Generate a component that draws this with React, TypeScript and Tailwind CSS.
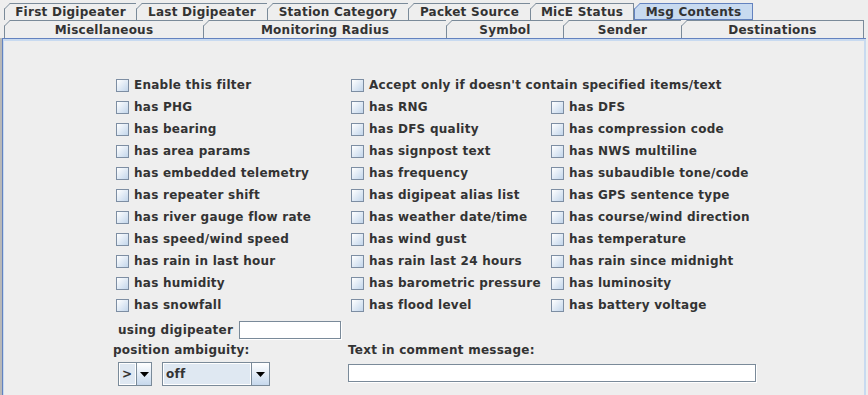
import React from 'react'

type Tab = { label: string; w: number; selected?: boolean }

const row1: Tab[] = [
  { label: 'First Digipeater', w: 133 },
  { label: 'Last Digipeater', w: 131 },
  { label: 'Station Category', w: 141 },
  { label: 'Packet Source', w: 122 },
  { label: 'MicE Status', w: 103 },
  { label: 'Msg Contents', w: 119, selected: true },
]

const row2: Tab[] = [
  { label: 'Miscellaneous', w: 200 },
  { label: 'Monitoring Radius', w: 243 },
  { label: 'Symbol', w: 117 },
  { label: 'Sender', w: 118 },
  { label: 'Destinations', w: 182 },
]

const rows: [string, string, string][] = [
  ['has PHG', 'has RNG', 'has DFS'],
  ['has bearing', 'has DFS quality', 'has compression code'],
  ['has area params', 'has signpost text', 'has NWS multiline'],
  ['has embedded telemetry', 'has frequency', 'has subaudible tone/code'],
  ['has repeater shift', 'has digipeat alias list', 'has GPS sentence type'],
  ['has river gauge flow rate', 'has weather date/time', 'has course/wind direction'],
  ['has speed/wind speed', 'has wind gust', 'has temperature'],
  ['has rain in last hour', 'has rain last 24 hours', 'has rain since midnight'],
  ['has humidity', 'has barometric pressure', 'has luminosity'],
  ['has snowfall', 'has flood level', 'has battery voltage'],
]

function TabItem({ tab, first, h }: { tab: Tab; first: boolean; h: string }) {
  const line = tab.selected ? '#6382bf' : '#7a8a99'
  return (
    <div
      className={`relative flex items-center justify-center border-t border-r ${h} ${
        first || tab.selected ? 'border-l' : ''
      } ${tab.selected ? 'bg-[#c8daf0] border-[#6382bf] border-b' : 'bg-[#eeeeee] border-[#7a8a99]'}`}
      style={{ width: tab.w }}
    >
      <svg className="absolute -top-px -left-px" width="7" height="7">
        <polygon points="0,0 6,0 0,6" fill="#eeeeee" />
        <line x1="0.5" y1="6" x2="6" y2="0.5" stroke={line} strokeWidth="1" />
      </svg>
      <span className="leading-none">{tab.label}</span>
    </div>
  )
}

function Check({ label }: { label: string }) {
  return (
    <div className="flex items-center h-[22px] gap-[5px] whitespace-nowrap">
      <div className="w-[13px] h-[13px] border border-[#7d8ea3] bg-linear-to-br from-[#ffffff] to-[#c3d6eb]" />
      <span>{label}</span>
    </div>
  )
}

function Combo({ value, w, field }: { value: string; w: number; field: number }) {
  return (
    <div className="flex h-[24px] border border-[#7a8a99]" style={{ width: w }}>
      <div
        className="flex items-center pl-[2px] border border-white bg-[#dfe8f2]"
        style={{ width: field }}
      >
        {value}
      </div>
      <div className="flex-1 flex items-center justify-center border-l border-[#7a8a99] bg-linear-to-b from-[#ffffff] to-[#c6d8ec]">
        <svg width="9" height="5" viewBox="0 0 9 5">
          <polygon points="0,0 9,0 4.5,5" fill="#000" />
        </svg>
      </div>
    </div>
  )
}

export default function App() {
  return (
    <div className="w-[868px] h-[395px] overflow-hidden bg-[#eeeeee] text-[#333333] text-[12px] tracking-[0.25px] font-bold font-['DejaVu_Sans',sans-serif]">
      <div className="pl-[4px] pt-[3px]">
        <div className="flex">
          {row1.map((t, i) => (
            <TabItem key={t.label} tab={t} first={i === 0} h="h-[17px]" />
          ))}
        </div>
        <div className="flex">
          {row2.map((t, i) => (
            <TabItem key={t.label} tab={t} first={i === 0} h="h-[18px]" />
          ))}
        </div>
      </div>

      <div className="flex h-[357px]">
        <div className="w-[2px] bg-[#b8b8b8]" />
        <div className="w-[864px] border-l border-t border-[#6382bf]">
          <div className="h-full border-t-2 border-l border-r-2 border-[#c8daf0] pt-[33px]">
            <div className="pl-[112px] grid grid-cols-[235px_200px_auto]">
              <Check label="Enable this filter" />
              <div className="col-span-2">
                <Check label="Accept only if doesn't contain specified items/text" />
              </div>
              {rows.map(r => (
                <React.Fragment key={r[0]}>
                  <Check label={r[0]} />
                  <Check label={r[1]} />
                  <Check label={r[2]} />
                </React.Fragment>
              ))}
            </div>

            <div className="pl-[114px] mt-[5px] flex items-center gap-[6px]">
              <span>using digipeater</span>
              <div className="w-[102px] h-[18px] border border-[#7a8a99] bg-white shadow-[1px_1px_0_#ffffff]" />
            </div>

            <div className="pl-[109px] mt-[3px] flex">
              <div className="w-[234px]">
                <div className="h-[16px] leading-[16px]">position ambiguity:</div>
                <div className="flex gap-[10px] mt-[4px] pl-[5px]">
                  <Combo value=">" w={34} field={17} />
                  <Combo value="off" w={108} field={88} />
                </div>
              </div>
              <div className="pl-[1px]">
                <div className="h-[16px] leading-[16px]">Text in comment message:</div>
                <div className="mt-[6px] w-[408px] h-[18px] border border-[#7a8a99] bg-white shadow-[1px_1px_0_#ffffff]" />
              </div>
            </div>
          </div>
        </div>
      </div>
    </div>
  )
}
